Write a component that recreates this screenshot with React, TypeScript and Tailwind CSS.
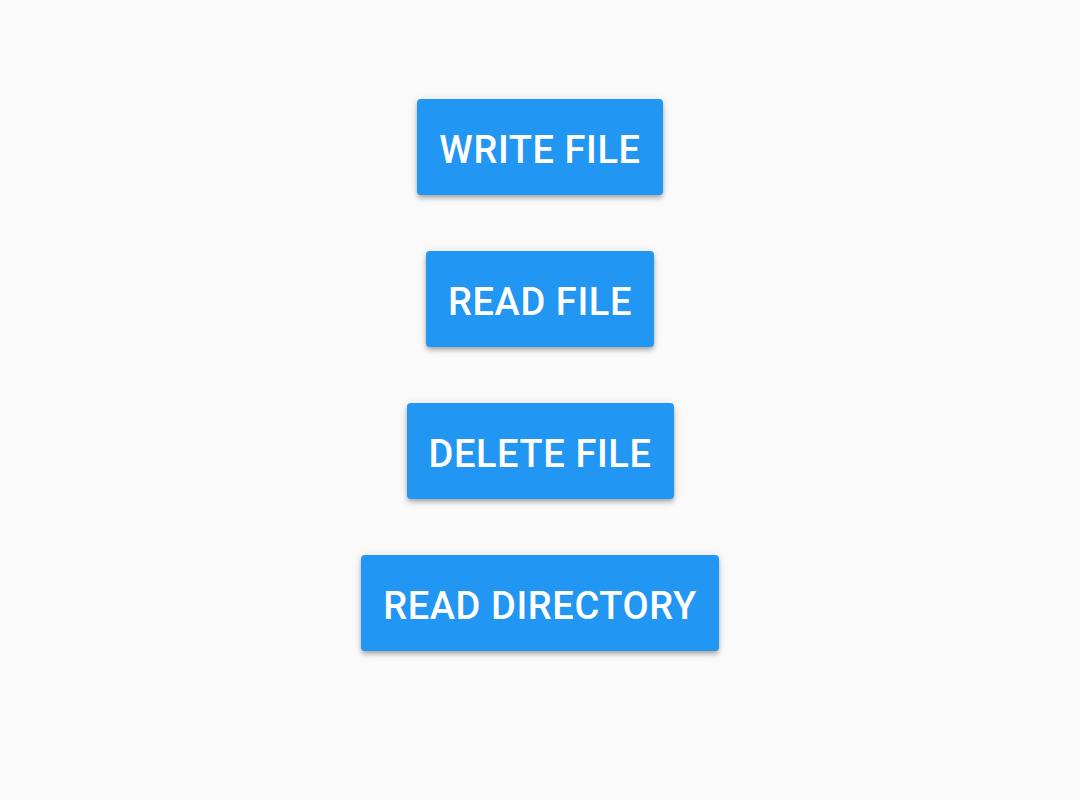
import React from "react";

const labels = ["WRITE FILE", "READ FILE", "DELETE FILE", "READ DIRECTORY"];

export default function App() {
  return (
    <div className="w-[1080px] h-[800px] bg-[#fafafa] flex flex-col items-center pt-[99px] gap-[56px]" style={{ fontFamily: "Roboto, sans-serif" }}>
      {labels.map((l) => (
        <button
          key={l}
          className="h-[96px] px-[22px] pt-[5px] rounded-[4px] bg-[#2196f3] text-white text-[38px] leading-none font-medium tracking-[0.6px] shadow-[0_2px_4px_-1px_rgba(0,0,0,0.2),0_4px_5px_0_rgba(0,0,0,0.14),0_1px_10px_0_rgba(0,0,0,0.12)]"
        >
          {l}
        </button>
      ))}
    </div>
  );
}
